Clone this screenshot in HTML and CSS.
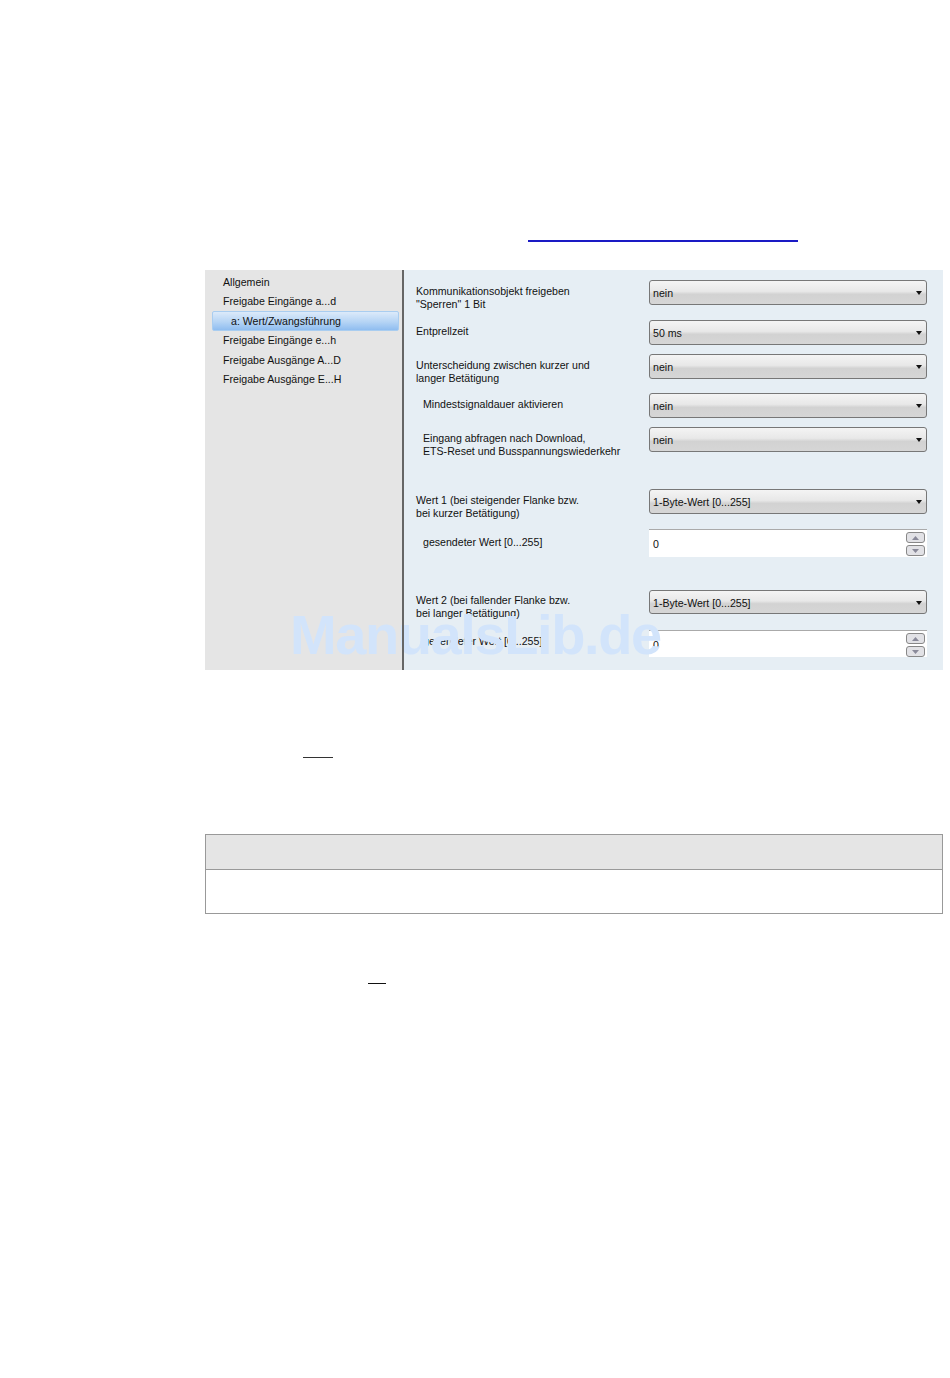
FILE: index.html
```html
<!DOCTYPE html>
<html lang="de">
<head>
<meta charset="utf-8">
<title>Parameter</title>
<link rel="stylesheet" href="styles.css">
</head>
<body>
<main class="page">
  <div class="rule rule-link"></div>
  <section class="panel">
    <nav class="tree">
      <div class="tree-item">Allgemein</div>
      <div class="tree-item">Freigabe Eingänge a...d</div>
      <div class="tree-item tree-selected">a: Wert/Zwangsführung</div>
      <div class="tree-item">Freigabe Eingänge e...h</div>
      <div class="tree-item">Freigabe Ausgänge A...D</div>
      <div class="tree-item">Freigabe Ausgänge E...H</div>
    </nav>
    <div class="params">
      <div class="row">
        <div class="label">Kommunikationsobjekt freigeben<br>"Sperren" 1 Bit</div>
        <div class="select">nein<span class="arrow"></span></div>
      </div>
      <div class="row gap-15">
        <div class="label">Entprellzeit</div>
        <div class="select">50 ms<span class="arrow"></span></div>
      </div>
      <div class="row gap-9">
        <div class="label">Unterscheidung zwischen kurzer und<br>langer Betätigung</div>
        <div class="select">nein<span class="arrow"></span></div>
      </div>
      <div class="row gap-14">
        <div class="label sub">Mindestsignaldauer aktivieren</div>
        <div class="select">nein<span class="arrow"></span></div>
      </div>
      <div class="row gap-9">
        <div class="label sub">Eingang abfragen nach Download,<br>ETS-Reset und Busspannungswiederkehr</div>
        <div class="select">nein<span class="arrow"></span></div>
      </div>
      <div class="row gap-37">
        <div class="label">Wert 1 (bei steigender Flanke bzw.<br>bei kurzer Betätigung)</div>
        <div class="select">1-Byte-Wert [0...255]<span class="arrow"></span></div>
      </div>
      <div class="row gap-15">
        <div class="label sub label-low">gesendeter Wert [0...255]</div>
        <div class="number">0
          <div class="spin">
            <span class="spin-btn"><svg width="7" height="4" viewBox="0 0 7 4"><path d="M3.5 0 7 4H0z"/></svg></span>
            <span class="spin-btn"><svg width="7" height="4" viewBox="0 0 7 4"><path d="M0 0h7L3.5 4z"/></svg></span>
          </div>
        </div>
      </div>
      <div class="row gap-33">
        <div class="label label-high">Wert 2 (bei fallender Flanke bzw.<br>bei langer Betätigung)</div>
        <div class="select select-short">1-Byte-Wert [0...255]<span class="arrow"></span></div>
      </div>
      <div class="row gap-16">
        <div class="label sub">gesendeter Wert [0...255]</div>
        <div class="number number-short">0
          <div class="spin">
            <span class="spin-btn"><svg width="7" height="4" viewBox="0 0 7 4"><path d="M3.5 0 7 4H0z"/></svg></span>
            <span class="spin-btn"><svg width="7" height="4" viewBox="0 0 7 4"><path d="M0 0h7L3.5 4z"/></svg></span>
          </div>
        </div>
      </div>
    </div>
    <div class="watermark">ManualsLib.de</div>
  </section>
  <div class="rule rule-one"></div>
  <div class="table">
    <div class="table-head"></div>
    <div class="table-body"></div>
  </div>
  <div class="rule rule-two"></div>
</main>
</body>
</html>
```
FILE: styles.css
```css
* { box-sizing: border-box; }
html, body { margin: 0; background: #fff; }
body { height: 1378px; overflow: hidden; font-family: "Liberation Sans", Arial, sans-serif; font-size: 10.6px; color: #111; }
.page { width: 943px; padding: 240px 0 0 205px; }

.rule { height: 1px; }
.rule-link { width: 270px; margin-left: 323px; height: 2px; background: #1a1ac4; }
.rule-one { width: 30px; margin: 87px 0 0 98px; height: 1px; background: #333; }
.rule-two { width: 18px; margin: 69px 0 0 163px; height: 1px; background: #111; }

.panel { position: relative; display: flex; height: 400px; margin-top: 28px; overflow: hidden; }
.panel::after { content: ""; position: absolute; top: 0; bottom: 0; left: 197px; width: 2px; background: #666; }
.tree { width: 199px; flex: none; padding: 2.5px 5px 0 7px; background: #e5e5e5; }
.tree-item { height: 19.5px; line-height: 19px; padding-left: 11px; }
.tree-selected { height: 20.5px; margin-top: -1px; padding-left: 18px; border-radius: 2px; border: 1px solid #a9cdf0; line-height: 19px; background: linear-gradient(#dceafa, #b5d4f5 55%, #8fbdf0); }

.params { flex: 1; padding: 10px 0 0 12px; background: #e6eef4; }
.row { display: grid; grid-template-columns: 233px 278px; align-items: start; }
.gap-9 { margin-top: 9px; }
.gap-14 { margin-top: 14px; }
.gap-15 { margin-top: 15px; }
.gap-16 { margin-top: 16px; }
.gap-33 { margin-top: 33px; }
.gap-37 { margin-top: 37px; }
.label { height: 24px; padding-top: 5px; line-height: 13px; white-space: nowrap; }
.label-low { padding-top: 7px; }
.label-high { padding-top: 4px; }
.sub { padding-left: 7px; }

.select { position: relative; height: 25px; padding-left: 3px; line-height: 25px; border: 1px solid #777; border-radius: 3px; background: linear-gradient(#f4f4f4, #e8e8e8 45%, #d2d2d2 58%, #d6d6d6); }
.select-short { height: 24px; line-height: 24px; }
.arrow { position: absolute; right: 4px; top: 10px; border-style: solid; border-width: 4px 3.5px 0; border-color: #111 transparent transparent; }

.number { position: relative; height: 28px; padding: 6px 0 0 4px; line-height: 16px; background: #fff; border-top: 1px solid #aaa; }
.number-short { height: 27px; }
.spin { position: absolute; top: 2px; right: 2px; display: flex; flex-direction: column; gap: 2px; }
.spin-btn { display: flex; align-items: center; justify-content: center; width: 19px; height: 11px; border: 1px solid #888; border-radius: 3px; background: #e2e2e6; }
.spin-btn svg { fill: #8a8a9a; }

.watermark { position: absolute; left: 85px; top: 335px; font-size: 56px; letter-spacing: -1.4px; line-height: 60px; font-weight: 700; color: #d2e4fb; white-space: nowrap; }

.table { margin-top: 76px; height: 80px; border: 1px solid #999; }
.table-head { height: 35px; background: #e5e5e5; border-bottom: 1px solid #999; }
.table-body { height: 43px; background: #fff; }
```
